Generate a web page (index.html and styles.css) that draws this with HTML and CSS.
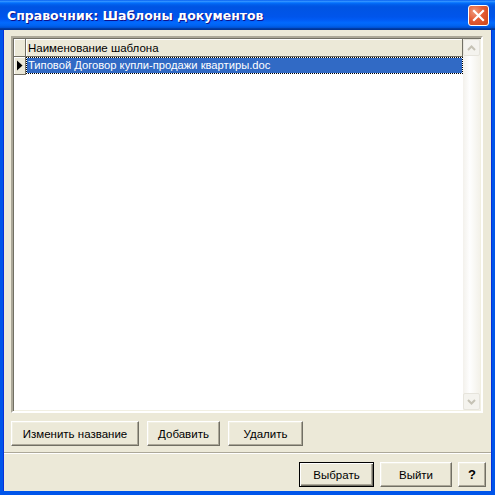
FILE: index.html
```html
<!DOCTYPE html>
<html lang="ru">
<head>
<meta charset="utf-8">
<title>Справочник: Шаблоны документов</title>
<link rel="stylesheet" href="styles.css">
</head>
<body>
<div class="window">
  <div class="titlebar">
    <span class="title">Справочник: Шаблоны документов</span>
    <span class="close">
      <svg width="13" height="13" viewBox="0 0 13 13"><path d="M2 2 L11 11 M11 2 L2 11" stroke="#fff" stroke-width="2.2" stroke-linecap="square"/></svg>
    </span>
  </div>
  <div class="client">
    <div class="grid">
      <div class="grid-main">
        <div class="grid-row header-row">
          <div class="indicator hdr"></div>
          <div class="hcell">Наименование шаблона</div>
        </div>
        <div class="grid-row data-row">
          <div class="indicator hdr">
            <svg width="7" height="11" viewBox="0 0 7 11"><path d="M1 0.5 L6.5 5.5 L1 10.5 Z" fill="#000"/></svg>
          </div>
          <div class="dcell"><span class="sel">Типовой Договор купли-продажи квартиры.doc</span></div>
        </div>
        <div class="grid-empty"></div>
      </div>
      <div class="vscroll">
        <div class="sbtn">
          <svg width="9" height="6" viewBox="0 0 9 6"><path d="M1 5 L4.5 1.5 L8 5" fill="none" stroke="#c5c2b5" stroke-width="2"/></svg>
        </div>
        <div class="strack"></div>
        <div class="sbtn">
          <svg width="9" height="6" viewBox="0 0 9 6"><path d="M1 1 L4.5 4.5 L8 1" fill="none" stroke="#c5c2b5" stroke-width="2"/></svg>
        </div>
      </div>
    </div>
    <div class="toolbar">
      <button class="btn w-rename">Изменить название</button>
      <button class="btn w-add">Добавить</button>
      <button class="btn w-del">Удалить</button>
    </div>
    <div class="separator"></div>
    <div class="footer">
      <button class="btn default w-ok">Выбрать</button>
      <button class="btn w-exit">Выйти</button>
      <button class="btn w-help"><b>?</b></button>
    </div>
  </div>
</div>
</body>
</html>
```
FILE: styles.css
```css
* { box-sizing: border-box; }
html, body { margin: 0; padding: 0; }
body {
  width: 495px;
  height: 495px;
  overflow: hidden;
  background: #0054e3;
  font-family: "Liberation Sans", "DejaVu Sans", sans-serif;
  font-size: 11px;
}
.window {
  width: 495px;
  height: 495px;
  display: flex;
  flex-direction: column;
  background: #0055ea;
}
.titlebar {
  height: 30px;
  flex: none;
  display: flex;
  align-items: center;
  justify-content: space-between;
  padding: 0 6px 0 7px;
  background: linear-gradient(to bottom, #0058ee 0%, #3593ff 4%, #288eff 6%, #127dff 8%, #036ffc 10%, #0262ee 14%, #0057e5 20%, #0054e3 24%, #0055eb 56%, #005bf5 66%, #026afe 76%, #0062ef 86%, #0052d6 92%, #0040ab 94%, #003092 100%);
}
.title {
  color: #fff;
  font-family: "DejaVu Sans", sans-serif;
  font-weight: bold;
  font-size: 12.5px;
  text-shadow: 1px 1px #0f1089;
  margin-top: 1px;
}
.close {
  width: 21px;
  height: 21px;
  border: 1px solid #fff;
  border-radius: 3px;
  background: radial-gradient(circle at 30% 30%, #f09a7c 0%, #e35b34 45%, #cc4516 100%);
  display: flex;
  align-items: center;
  justify-content: center;
}
.client {
  flex: 1;
  margin: 0 4px 4px 4px;
  background: #ece9d8;
  padding: 6px 8px 0 7px;
  display: flex;
  flex-direction: column;
  box-shadow: -1px 0 0 #0831d9, 1px 0 0 #0831d9;
}
.grid {
  height: 377px;
  border: 2px solid;
  border-color: #aca899 #ffffff #ffffff #aca899;
  box-shadow: inset 1px 1px 0 #716f64, inset -1px -1px 0 #f1efe2;
  display: flex;
  background: #fff;
  padding: 1px;
}
.grid-main {
  flex: 1;
  display: flex;
  flex-direction: column;
}
.grid-row {
  display: flex;
  height: 18px;
  flex: none;
}
.indicator {
  width: 12px;
  flex: none;
  display: flex;
  align-items: center;
  justify-content: center;
}
.hdr {
  background: #ece9d8;
  border-right: 1px solid #716f64;
  border-bottom: 1px solid #716f64;
  box-shadow: inset 1px 1px 0 #fff;
}
.hcell {
  flex: 1;
  background: #ece9d8;
  border-bottom: 1px solid #716f64;
  border-right: 1px solid #716f64;
  box-shadow: inset 1px 1px 0 #fff;
  padding: 2px 0 0 2px;
  line-height: 14px;
  font-size: 11.5px;
  color: #000;
  white-space: nowrap;
}
.dcell {
  flex: 1;
  border-bottom: 1px solid #fff;
  display: flex;
}
.sel {
  flex: 1;
  background: #316ac5;
  background-clip: padding-box;
  border: 1px dotted #000;
  color: #fff;
  padding: 0 0 0 1px;
  line-height: 15px;
  font-size: 11.2px;
  white-space: nowrap;
}
.grid-empty { flex: 1; background: #fff; }
.vscroll {
  width: 17px;
  flex: none;
  display: flex;
  flex-direction: column;
  background: linear-gradient(to right, #f3f1ec 0%, #fefefe 40%, #f3f1e9 100%);
}
.sbtn {
  width: 17px;
  height: 17px;
  flex: none;
  border: 1px solid #e6e4dc;
  border-radius: 2px;
  background: #f4f3ee;
  display: flex;
  align-items: center;
  justify-content: center;
}
.strack { flex: 1; }
.toolbar {
  display: flex;
  gap: 8px;
  margin-top: 8px;
  height: 25px;
}
.btn {
  font-family: "Liberation Sans", "DejaVu Sans", sans-serif;
  font-size: 11.5px;
  color: #000;
  height: 25px;
  background: #ece9d8;
  border: 1px solid;
  border-color: #fff #716f64 #716f64 #fff;
  box-shadow: inset -1px -1px 0 #aca899, inset 1px 1px 0 #f1efe2;
  padding: 0;
  margin: 0;
  line-height: 14px;
}
.btn.default {
  border: 1px solid #000;
  box-shadow: inset 1px 1px 0 #fff, inset -1px -1px 0 #716f64, inset -2px -2px 0 #aca899;
}
.w-rename { width: 128px; }
.w-add { width: 73px; }
.w-del { width: 75px; }
.separator {
  margin: 6px -8px 0 -7px;
  height: 2px;
  border-top: 1px solid #aca899;
  border-bottom: 1px solid #fff;
}
.footer {
  display: flex;
  justify-content: flex-end;
  gap: 6px;
  margin-top: 8px;
  margin-right: -3px;
}
.w-ok { width: 75px; }
.w-exit { width: 72px; }
.w-help { width: 28px; font-size: 13px; }
```
